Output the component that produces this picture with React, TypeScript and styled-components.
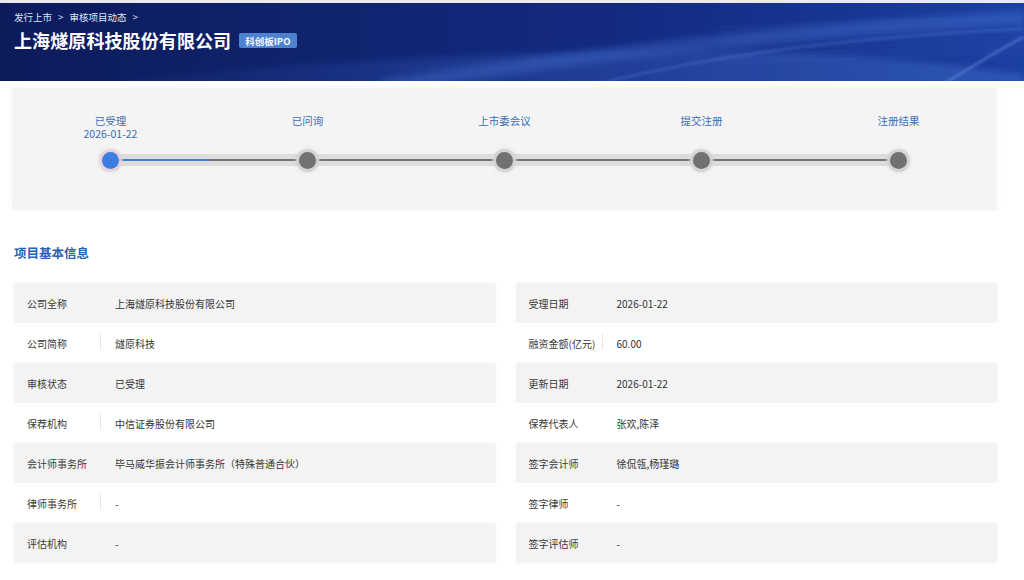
import React from "react";
import styled, { createGlobalStyle } from "styled-components";

const Global = createGlobalStyle`
  html, body { margin: 0; padding: 0; background: #ffffff; }
  body { font-family: "Noto Sans CJK SC", "Noto Sans", "Liberation Sans", sans-serif; -webkit-font-smoothing: antialiased; }
  * { box-sizing: border-box; }
`;

const Page = styled.div`
  width: 1024px;
  min-height: 580px;
  padding-top: 3px;
  background: linear-gradient(#e9ebf1 0 3px, #ffffff 3px);
`;

const Banner = styled.header`
  position: relative;
  height: 78px;
  overflow: hidden;
  background: linear-gradient(90deg, #0d1b5c 0%, #102470 35%, #132a80 60%, #173795 85%, #1b40a3 100%);
  padding: 7px 14px 0;
  color: #fff;
`;

const Waves = styled.svg`
  position: absolute;
  inset: 0;
  width: 100%;
  height: 100%;
  pointer-events: none;
`;

const BannerContent = styled.div`
  position: relative;
  display: flex;
  flex-direction: column;
  gap: 3px;
`;

const Crumbs = styled.div`
  display: flex;
  align-items: center;
  gap: 6px;
  font-size: 9.5px;
  color: #dfe6f7;
  line-height: 14px;
`;

const Chevron = styled.span`
  font-size: 10px;
  color: #c8d2ec;
`;

const TitleRow = styled.div`
  display: flex;
  align-items: center;
  gap: 8px;
`;

const Title = styled.h1`
  margin: 0;
  font-size: 18px;
  font-weight: 700;
  line-height: 26px;
  letter-spacing: 0.1px;
  color: #ffffff;
`;

const Badge = styled.span`
  display: inline-flex;
  align-items: center;
  height: 15px;
  padding: 0 6px;
  border-radius: 2px;
  background: #4d82d0;
  color: #f3f7ff;
  font-size: 9.5px;
  font-weight: 700;
  margin-top: 1px;
`;

const ProgressCard = styled.section`
  margin: 7px 27px 0 12px;
  height: 122px;
  background: #f4f4f5;
  border-radius: 3px;
  box-shadow: 0 0 6px rgba(0, 0, 0, 0.04);
  position: relative;
`;

const StepsGrid = styled.div`
  position: relative;
  display: grid;
  grid-template-columns: repeat(5, 1fr);
  padding-top: 26px;
`;

const Track = styled.div`
  position: absolute;
  left: 10%;
  right: 10%;
  top: 66px;
  height: 12px;
  background: #dcdcdc;
  border-radius: 6px;
`;

const TrackLine = styled.div`
  position: absolute;
  left: 0;
  right: 0;
  top: 5px;
  height: 2px;
  background: #747474;
`;

const TrackDone = styled.div`
  position: absolute;
  left: 0;
  top: 5px;
  height: 2px;
  background: #3f7fd9;
`;

const Step = styled.div`
  position: relative;
  display: flex;
  flex-direction: column;
  align-items: center;
`;

const StepLabel = styled.div`
  height: 35px;
  text-align: center;
  font-size: 10.5px;
  line-height: 13px;
  color: #3c6db2;
`;

const Dot = styled.div<{ $active?: boolean }>`
  width: 17px;
  height: 17px;
  border-radius: 50%;
  margin-top: 3px;
  background: ${(p) => (p.$active ? "#3b7de0" : "#717171")};
  box-shadow: 0 0 0 3px ${(p) => (p.$active ? "rgba(232, 205, 215, 0.8)" : "rgba(210, 210, 210, 0.9)")},
    0 0 3px 4px rgba(220, 220, 220, 0.5);
`;

const InfoSection = styled.section`
  padding: 34px 27px 0 14px;
`;

const SectionTitle = styled.h2`
  margin: 0 0 21px;
  font-size: 12.5px;
  line-height: 18px;
  font-weight: 700;
  color: #2d5fb4;
`;

const InfoGrid = styled.div`
  display: grid;
  grid-template-columns: 1fr 1fr;
  column-gap: 20px;
`;

const Row = styled.div<{ $shade: boolean }>`
  display: flex;
  align-items: center;
  height: 40px;
  padding-left: 13px;
  background: ${(p) => (p.$shade ? "#f3f3f3" : "#ffffff")};
  box-shadow: ${(p) => (p.$shade ? "0 0 4px rgba(0,0,0,0.035)" : "none")};
  border-radius: 2px;
  font-size: 10px;
  color: #333333;
`;

const Label = styled.span<{ $sep: boolean }>`
  width: 88px;
  flex: none;
  position: relative;
  color: #3a3a3a;
  &::after {
    content: "";
    display: ${(p) => (p.$sep ? "block" : "none")};
    position: absolute;
    right: 14px;
    top: -2px;
    height: 16px;
    width: 1px;
    background: #e6e6e6;
  }
`;

const Value = styled.span`
  color: #333333;
`;

const steps = [
  { name: "已受理", date: "2026-01-22", active: true },
  { name: "已问询" },
  { name: "上市委会议" },
  { name: "提交注册" },
  { name: "注册结果" },
];

const left: [string, string, boolean][] = [
  ["公司全称", "上海燧原科技股份有限公司", false],
  ["公司简称", "燧原科技", true],
  ["审核状态", "已受理", false],
  ["保荐机构", "中信证券股份有限公司", true],
  ["会计师事务所", "毕马威华振会计师事务所（特殊普通合伙）", false],
  ["律师事务所", "-", true],
  ["评估机构", "-", false],
];

const right: [string, string, boolean][] = [
  ["受理日期", "2026-01-22", false],
  ["融资金额(亿元)", "60.00", true],
  ["更新日期", "2026-01-22", false],
  ["保荐代表人", "张欢,陈泽", false],
  ["签字会计师", "徐侃瓴,杨瑾璐", false],
  ["签字律师", "-", false],
  ["签字评估师", "-", false],
];

export default function App() {
  return (
    <Page>
      <Global />
      <Banner>
        <Waves viewBox="0 0 1024 78" preserveAspectRatio="none">
          <defs>
            <linearGradient id="wg" x1="0" x2="1" y1="0" y2="0">
              <stop offset="0" stopColor="#3b6ad0" stopOpacity="0" />
              <stop offset="0.4" stopColor="#3f70d6" stopOpacity="0.4" />
              <stop offset="1" stopColor="#5a8ae6" stopOpacity="0.5" />
            </linearGradient>
            <filter id="soft" x="-10%" y="-50%" width="120%" height="200%">
              <feGaussianBlur stdDeviation="3" />
            </filter>
            <filter id="soft2" x="-10%" y="-50%" width="120%" height="200%">
              <feGaussianBlur stdDeviation="1.2" />
            </filter>
          </defs>
          <g filter="url(#soft)">
            <path d="M60 82 C300 60 520 46 720 48 C860 50 960 62 1024 72 L1024 82 Z" fill="url(#wg)" opacity="0.6" />
            <path d="M380 84 C560 55 760 30 1024 14" stroke="#4d7ede" strokeOpacity="0.3" strokeWidth="14" fill="none" />
          </g>
          <g filter="url(#soft2)">
            <path d="M600 80 C700 56 820 36 1024 26" stroke="#6a98ee" strokeOpacity="0.22" strokeWidth="3" fill="none" />
            <path d="M945 80 C975 62 1000 46 1024 34" stroke="#7aa4f0" strokeOpacity="0.35" strokeWidth="3" fill="none" />
            {Array.from({ length: 10 }).map((_, i) => (
              <path
                key={i}
                d={`M720 ${24 + i * 4} C830 ${20 + i * 4} 930 ${16 + i * 4} 1024 ${14 + i * 4}`}
                stroke="#7aa2ee"
                strokeOpacity="0.14"
                strokeWidth="1"
                fill="none"
              />
            ))}
          </g>
        </Waves>
        <BannerContent>
          <Crumbs>
            <span>发行上市</span>
            <Chevron>&gt;</Chevron>
            <span>审核项目动态</span>
            <Chevron>&gt;</Chevron>
          </Crumbs>
          <TitleRow>
            <Title>上海燧原科技股份有限公司</Title>
            <Badge>科创板IPO</Badge>
          </TitleRow>
        </BannerContent>
      </Banner>

      <ProgressCard>
        <StepsGrid>
          <Track>
            <TrackLine />
            <TrackDone style={{ width: `${(1 / 8) * 100}%` }} />
          </Track>
          {steps.map((s) => (
            <Step key={s.name}>
              <StepLabel>
                {s.name}
                {s.date && <br />}
                {s.date}
              </StepLabel>
              <Dot $active={s.active} />
            </Step>
          ))}
        </StepsGrid>
      </ProgressCard>

      <InfoSection>
        <SectionTitle>项目基本信息</SectionTitle>
        <InfoGrid>
          {left.map((l, i) => {
            const r = right[i];
            return (
              <React.Fragment key={l[0]}>
                <Row $shade={i % 2 === 0}>
                  <Label $sep={l[2]}>{l[0]}</Label>
                  <Value>{l[1]}</Value>
                </Row>
                <Row $shade={i % 2 === 0}>
                  <Label $sep={r[2]}>{r[0]}</Label>
                  <Value>{r[1]}</Value>
                </Row>
              </React.Fragment>
            );
          })}
        </InfoGrid>
      </InfoSection>
    </Page>
  );
}
